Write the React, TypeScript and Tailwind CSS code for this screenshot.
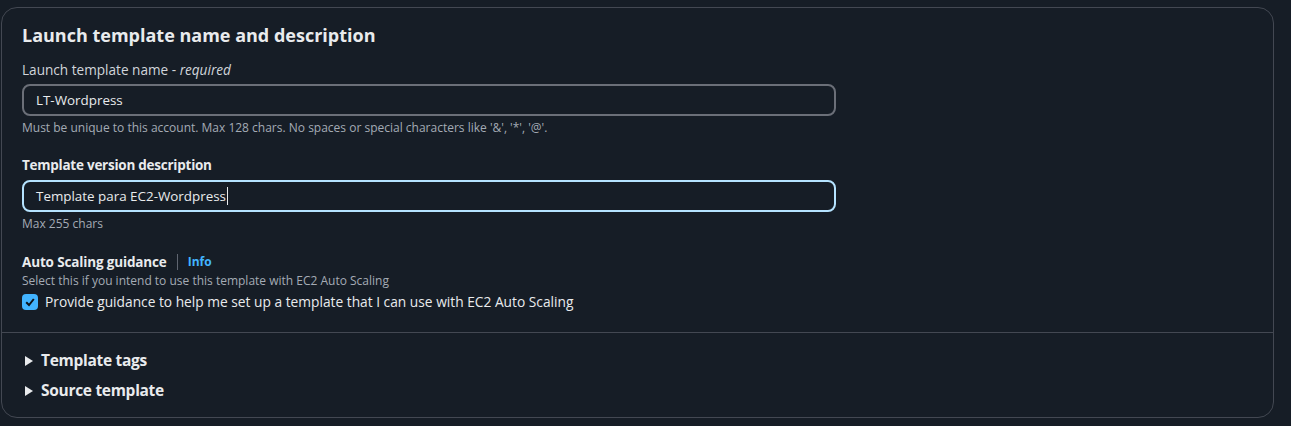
import React, { useState } from 'react';

const font = { fontFamily: '"Open Sans", "Noto Sans", Arial, sans-serif' };

const Caret = () => (
  <svg width="8" height="10" viewBox="0 0 8 10" className="shrink-0">
    <path d="M0 0 L8 5 L0 10 Z" fill="#e9ebed" />
  </svg>
);

const Expander = ({ label }: { label: string }) => (
  <div className="flex h-[30px] items-center gap-[8px] pl-[3px] text-[15.5px] font-bold tracking-[-0.3px] text-[#e9ebed]">
    <Caret />
    <span>{label}</span>
  </div>
);

export default function App() {
  const [name, setName] = useState('LT-Wordpress');
  const [desc, setDesc] = useState('Template para EC2-Wordpress');
  const [guided, setGuided] = useState(true);

  return (
    <div
      className="h-[426px] w-full bg-[#161d26] pb-[8px] pl-[1px] pr-[17px] pt-[7px] antialiased"
      style={font}
    >
      <div className="flex h-[411px] flex-col rounded-[16px] border border-[#434852] bg-[#161d26]">
        <div className="flex flex-col px-[20px] pt-[16px]">
          <h2 className="text-[18px] font-bold leading-[22px] text-[#e9ebed]">
            Launch template name and description
          </h2>

          <label className="mt-[13px] text-[13.6px] leading-[22px] text-[#d1d5db]">
            Launch template name - <i>required</i>
          </label>
          <input
            className="mt-[3px] h-[32px] w-[814px] rounded-[8px] border-2 border-[#6b6f78] bg-[#161d26] px-[12px] text-[13.4px] text-[#e9ebed] outline-none"
            value={name}
            onChange={e => setName(e.target.value)}
          />
          <p className="mt-[4px] text-[12px] leading-[16px] text-[#a4abb5]">
            Must be unique to this account. Max 128 chars. No spaces or special characters like '&amp;', '*', '@'.
          </p>

          <label className="mt-[18px] text-[13.5px] font-bold leading-[22px] tracking-[-0.25px] text-[#e9ebed]">
            Template version description
          </label>
          <div className="mt-[4px] flex h-[32px] w-[814px] items-center rounded-[8px] border-2 border-[#b5e3ff] px-[12px] text-[13.4px] text-[#e9ebed]">
            <span>{desc}</span>
            <span className="ml-[1px] h-[18px] w-px bg-[#e9ebed]" />
          </div>
          <p className="mt-[4px] text-[12px] leading-[16px] text-[#a4abb5]">Max 255 chars</p>

          <div className="mt-[19px] flex items-center text-[13.5px] leading-[22px]">
            <span className="font-bold tracking-[-0.15px] text-[#e9ebed]">Auto Scaling guidance</span>
            <span className="mx-[10px] h-[16px] w-px bg-[#5f6570]" />
            <span className="text-[12px] font-bold text-[#42b4ff]">Info</span>
          </div>
          <p className="text-[12px] leading-[16px] text-[#a4abb5]">
            Select this if you intend to use this template with EC2 Auto Scaling
          </p>
          <label
            className="mt-[2px] flex h-[22px] cursor-pointer items-center gap-[7px] text-[13.75px] text-[#e9ebed]"
            onClick={() => setGuided(!guided)}
          >
            <span className="flex h-[16px] w-[16px] items-center justify-center rounded-[4px] bg-[#42b4ff]">
              {guided && (
                <svg width="12" height="12" viewBox="0 0 12 12">
                  <path d="M2.2 6.2 L5 9 L9.8 3" fill="none" stroke="#0f141a" strokeWidth="2" />
                </svg>
              )}
            </span>
            Provide guidance to help me set up a template that I can use with EC2 Auto Scaling
          </label>
        </div>

        <div className="mt-[19px] border-t border-[#434852]" />

        <div className="flex flex-col px-[20px] pt-[13px]">
          <Expander label="Template tags" />
          <Expander label="Source template" />
        </div>
      </div>
    </div>
  );
}
